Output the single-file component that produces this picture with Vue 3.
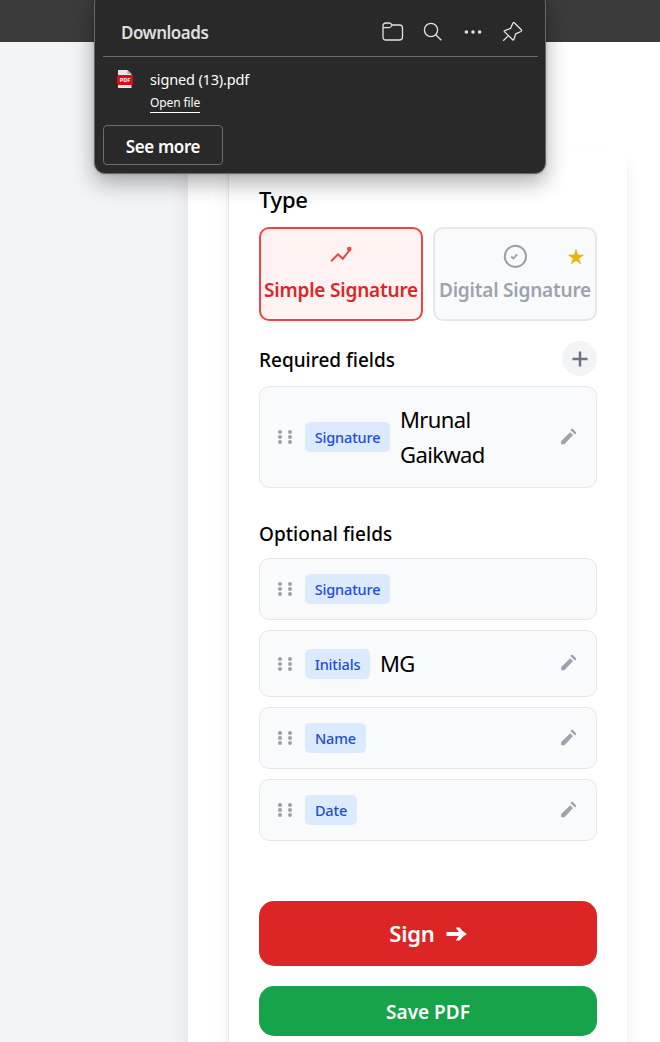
<script setup>
const requiredFields = [{ label: 'Signature', kind: 'sig', value: 'Mrunal Gaikwad', editable: true, size: 'large' }]
const optionalFields = [
  { label: 'Signature', kind: 'sig', value: '', editable: false, size: 'small' },
  { label: 'Initials', kind: 'ini', value: 'MG', editable: true, size: 'medium' },
  { label: 'Name', kind: 'name', value: '', editable: true, size: 'small' },
  { label: 'Date', kind: 'date', value: '', editable: true, size: 'small' },
]
const groups = [
  { id: 'required', title: 'Required fields', fields: requiredFields, canAdd: true },
  { id: 'optional', title: 'Optional fields', fields: optionalFields, canAdd: false },
]
</script>

<template>
  <div class="page">
    <div class="topbar"></div>
    <div class="body">
      <div class="gutter"></div>
      <main class="workspace">
        <section class="panel">
          <h2 class="title">Type</h2>
          <div class="types">
            <button class="type active">
              <svg width="24" height="24" viewBox="0 0 24 24" fill="none">
                <path d="M2.2 17.2 9 10.3 13.8 14.7 20.3 6.5" stroke="#ef4444" stroke-width="2" />
                <circle cx="20.3" cy="5" r="2.3" fill="#ef4444" />
              </svg>
              <span class="simple">Simple Signature</span>
            </button>
            <button class="type">
              <svg width="24" height="24" viewBox="0 0 24 24" fill="none" stroke="#a0a0a0">
                <circle cx="12.4" cy="12.4" r="10.6" stroke-width="2" />
                <path d="M8.2 12.5 10.3 14.5 14.2 10.3" stroke-width="1.8" />
              </svg>
              <span class="digital">Digital Signature</span>
              <svg class="star" width="18" height="18" viewBox="0 0 18 18">
                <path d="M9 .7 11 6.7H17.2L12.2 10.4 14.2 16.6 9 12.8 3.8 16.6 5.8 10.4.8 6.7H7Z" fill="#eab308" />
              </svg>
            </button>
          </div>
          <div v-for="g in groups" :key="g.id" class="group" :class="g.id">
            <div class="group-head">
              <h3>{{ g.title }}</h3>
              <button v-if="g.canAdd" class="add">
                <svg width="16" height="16" viewBox="0 0 16 16" stroke="#6b7280" stroke-width="2.5">
                  <path d="M8 .5V15.5M.5 8H15.5" />
                </svg>
              </button>
            </div>
            <div class="list">
              <div v-for="f in g.fields" :key="f.label" class="field" :class="f.size">
                <svg class="grip" width="16" height="16" viewBox="0 0 16 16" fill="#a0a0a0">
                  <circle v-for="n in 6" :key="n" :cx="n % 2 ? 3 : 13" :cy="3 + 5 * Math.floor((n - 1) / 2)" r="2" />
                </svg>
                <span class="tag" :class="f.kind"><b>{{ f.label }}</b></span>
                <span class="value">{{ f.value }}</span>
                <svg v-if="f.editable" class="pencil" width="16" height="17" viewBox="0 0 16 17" fill="#9ca3af">
                  <path d="M.2 13 9.2 4.2 12 7 3.4 16.2H.2ZM9.3 2.1 10.3 1Q11.1.4 11.8 1L15 4.2Q15.5 4.9 15 5.6L14 6.6Z" />
                </svg>
              </div>
            </div>
          </div>
          <button class="action sign">
            <span>Sign</span>
            <svg width="21" height="14" viewBox="0 0 21 14">
              <path d="M.5 5H12.8L9.8.4H13.6Q15.8 4 20.8 7 15.8 10 13.6 13.6H9.8L12.8 9H.5Z" fill="#fff" />
            </svg>
          </button>
          <button class="action save"><span>Save PDF</span></button>
        </section>
      </main>
    </div>

    <aside class="downloads">
      <header>
        <span class="dl-title">Downloads</span>
        <div class="tools">
          <svg width="22" height="20" viewBox="0 0 22 20">
            <path d="M1 4.2Q1 1 4 1H7.2Q8.5 1 9.5 2.3L10.2 3H17.5Q20.5 3 20.5 6V15Q20.5 18 17.5 18H4Q1 18 1 15ZM1 5.6H7.4Q8.8 5.6 10.2 3" />
          </svg>
          <svg width="20" height="20" viewBox="0 0 20 20">
            <circle cx="8" cy="8" r="6.6" /><path d="M12.8 12.8 18.3 18.3" />
          </svg>
          <svg width="18" height="6" viewBox="0 0 18 6" class="dots">
            <circle cx="2.4" cy="3" r="1.8" /><circle cx="9" cy="3" r="1.8" /><circle cx="15.6" cy="3" r="1.8" />
          </svg>
          <svg width="22" height="22" viewBox="0 0 22 22">
            <path d="M12.2 1.8 19.3 8.7Q20.2 9.8 18.9 10.5L13.8 12.8 11.8 18.5Q11.4 19.4 10.7 18.7L2.4 10.6Q1.9 9.9 2.7 9.7L8.5 7.4 10.7 2.4Q11.3 1 12.2 1.8ZM6.5 14.6 1.2 19.8" />
          </svg>
        </div>
      </header>
      <div class="file">
        <svg width="16" height="18" viewBox="0 0 16 18">
          <path d="M1 0H10.5L14.5 4V18H1Z" fill="#e6e6e6" />
          <path d="M10.5 0V4H14.5Z" fill="#aaa" />
          <rect y="5" width="16" height="10" rx="1" fill="#dc0d1b" />
          <text x="8" y="12.2" text-anchor="middle" font-size="5.6" font-weight="700" fill="#fff">PDF</text>
        </svg>
        <div class="file-info">
          <span class="file-name">signed (13).pdf</span>
          <span class="open">Open file</span>
        </div>
      </div>
      <button class="more"><span>See more</span></button>
    </aside>
  </div>
</template>

<style>
body { margin: 0; overflow: hidden; }
</style>

<style scoped>
* { box-sizing: border-box; }
.page { position: relative; width: 660px; height: 1042px; overflow: hidden; display: flex; flex-direction: column; background: #fff; font-family: "Noto Sans", "Open Sans", sans-serif; color: #000; }
button { font: inherit; border: 0; margin: 0; padding: 0; }
h2, h3 { margin: 0; font-weight: 500; white-space: nowrap; }
svg { flex: none; display: block; }
.topbar { height: 42px; background: #3b3b3b; flex: none; }
.body { flex: 1; display: flex; min-height: 0; }
.gutter { width: 188px; flex: none; background: linear-gradient(90deg, #f3f4f6 0 172px, #e9eaec 188px); }
.workspace { flex: 1; padding: 106px 33px 0 40px; }
.panel { height: 930px; padding: 36px 30px 0; border-left: 1px solid #e5e7eb; background: #fff; box-shadow: 0 12px 19px -4px rgba(0,0,0,.1), 0 5px 8px -5px rgba(0,0,0,.1); }
.title { font-size: 22px; line-height: 30px; letter-spacing: -.3px; }
.types { display: grid; grid-template-columns: 164px 164px; gap: 10px; margin-top: 13px; }
.type { position: relative; height: 94px; border: 2px solid #e5e7eb; border-radius: 10px; background: #f9fafb; color: #9ca3af; display: flex; flex-direction: column; align-items: center; padding-top: 15px; font-size: 19px; line-height: 30px; font-weight: 600; white-space: nowrap; }
.type span { margin-top: 7px; }
.type.active { border-color: #ef4444; background: #fef2f2; color: #dc2626; }
.simple { letter-spacing: -.2px; }
.digital { letter-spacing: -.2px; }
.star { position: absolute; right: 10px; top: 19px; }
.required { margin-top: 20px; }
.optional { margin-top: 28px; }
.group-head { display: flex; justify-content: space-between; align-items: center; height: 35px; }
.group-head h3 { font-size: 19px; letter-spacing: 0; padding-top: 3px; }
.optional h3 { padding-top: 0; letter-spacing: .05px; }
.add { width: 35px; height: 35px; border-radius: 50%; background: #f3f4f6; display: grid; place-items: center; }
.list { display: flex; flex-direction: column; gap: 10px; margin-top: 10px; }
.optional .list { margin-top: 7px; }
.field { display: flex; align-items: center; border: 1px solid #e5e7eb; border-radius: 10px; background: #f9fafb; padding: 0 19px 0 17px; }
.field.large { height: 102px; }
.field.medium { height: 67px; }
.field.small { height: 62px; }
.grip { margin-right: 12px; }
.pencil { margin-bottom: 2px; }
.tag { height: 30px; border-radius: 5px; background: #dbeafe; color: #1d4ed8; font-size: 14.5px; display: grid; place-items: center; flex: none; }
.tag b { font-weight: 500; letter-spacing: -.15px; }
.tag.sig { width: 85px; }
.tag.ini { width: 65px; }
.tag.name { width: 61px; }
.tag.date { width: 52px; }
.value { flex: none; width: 120px; margin-left: 10px; margin-right: auto; font-size: 22px; line-height: 35px; letter-spacing: -.6px; }
.action { width: 338px; border-radius: 15px; color: #fff; font-weight: 600; display: flex; align-items: center; justify-content: center; }
.sign { height: 65px; margin-top: 60px; gap: 11px; background: #dc2626; font-size: 22px; letter-spacing: -.2px; }
.sign span { padding-bottom: 2px; }
.save { height: 50px; margin-top: 20px; background: #16a34a; font-size: 19px; letter-spacing: 0; padding-top: 2px; }
.downloads { position: absolute; left: 94px; top: -8px; width: 452px; height: 182px; padding: 8px 7px 0 8px; border: 1px solid #686868; border-radius: 11px; background: #292929; color: #fff; box-shadow: 0 9px 22px rgba(0,0,0,.32), 0 0 3px rgba(0,0,0,.2); }
.downloads header { height: 57px; margin-top: -1px; border-bottom: 1px solid #6c6c6c; display: flex; align-items: center; justify-content: space-between; padding: 8px 5px 0 18px; }
.dl-title { font-size: 17px; font-weight: 600; color: #dedede; letter-spacing: -.5px; }
.tools { display: grid; grid-template-columns: repeat(4, 40px); place-items: center; fill: none; stroke: #e2e2e2; stroke-width: 1.3; }
.dots { fill: #e2e2e2; stroke: none; }
.file { display: flex; gap: 17px; padding: 13px 0 0 14px; height: 68px; }
.file-info { display: flex; flex-direction: column; align-items: flex-start; margin-top: -1px; }
.file-name { font-size: 14.5px; line-height: 20px; white-space: nowrap; letter-spacing: -.15px; }
.open { font-size: 12px; line-height: 18px; margin-top: 5px; border-bottom: 1px solid #fff; letter-spacing: -.1px; }
.more { width: 120px; height: 40px; border: 1px solid #6c6c6c; border-radius: 4px; background: transparent; color: #fff; font-size: 17px; font-weight: 600; letter-spacing: -.4px; padding-top: 3px; }
</style>
